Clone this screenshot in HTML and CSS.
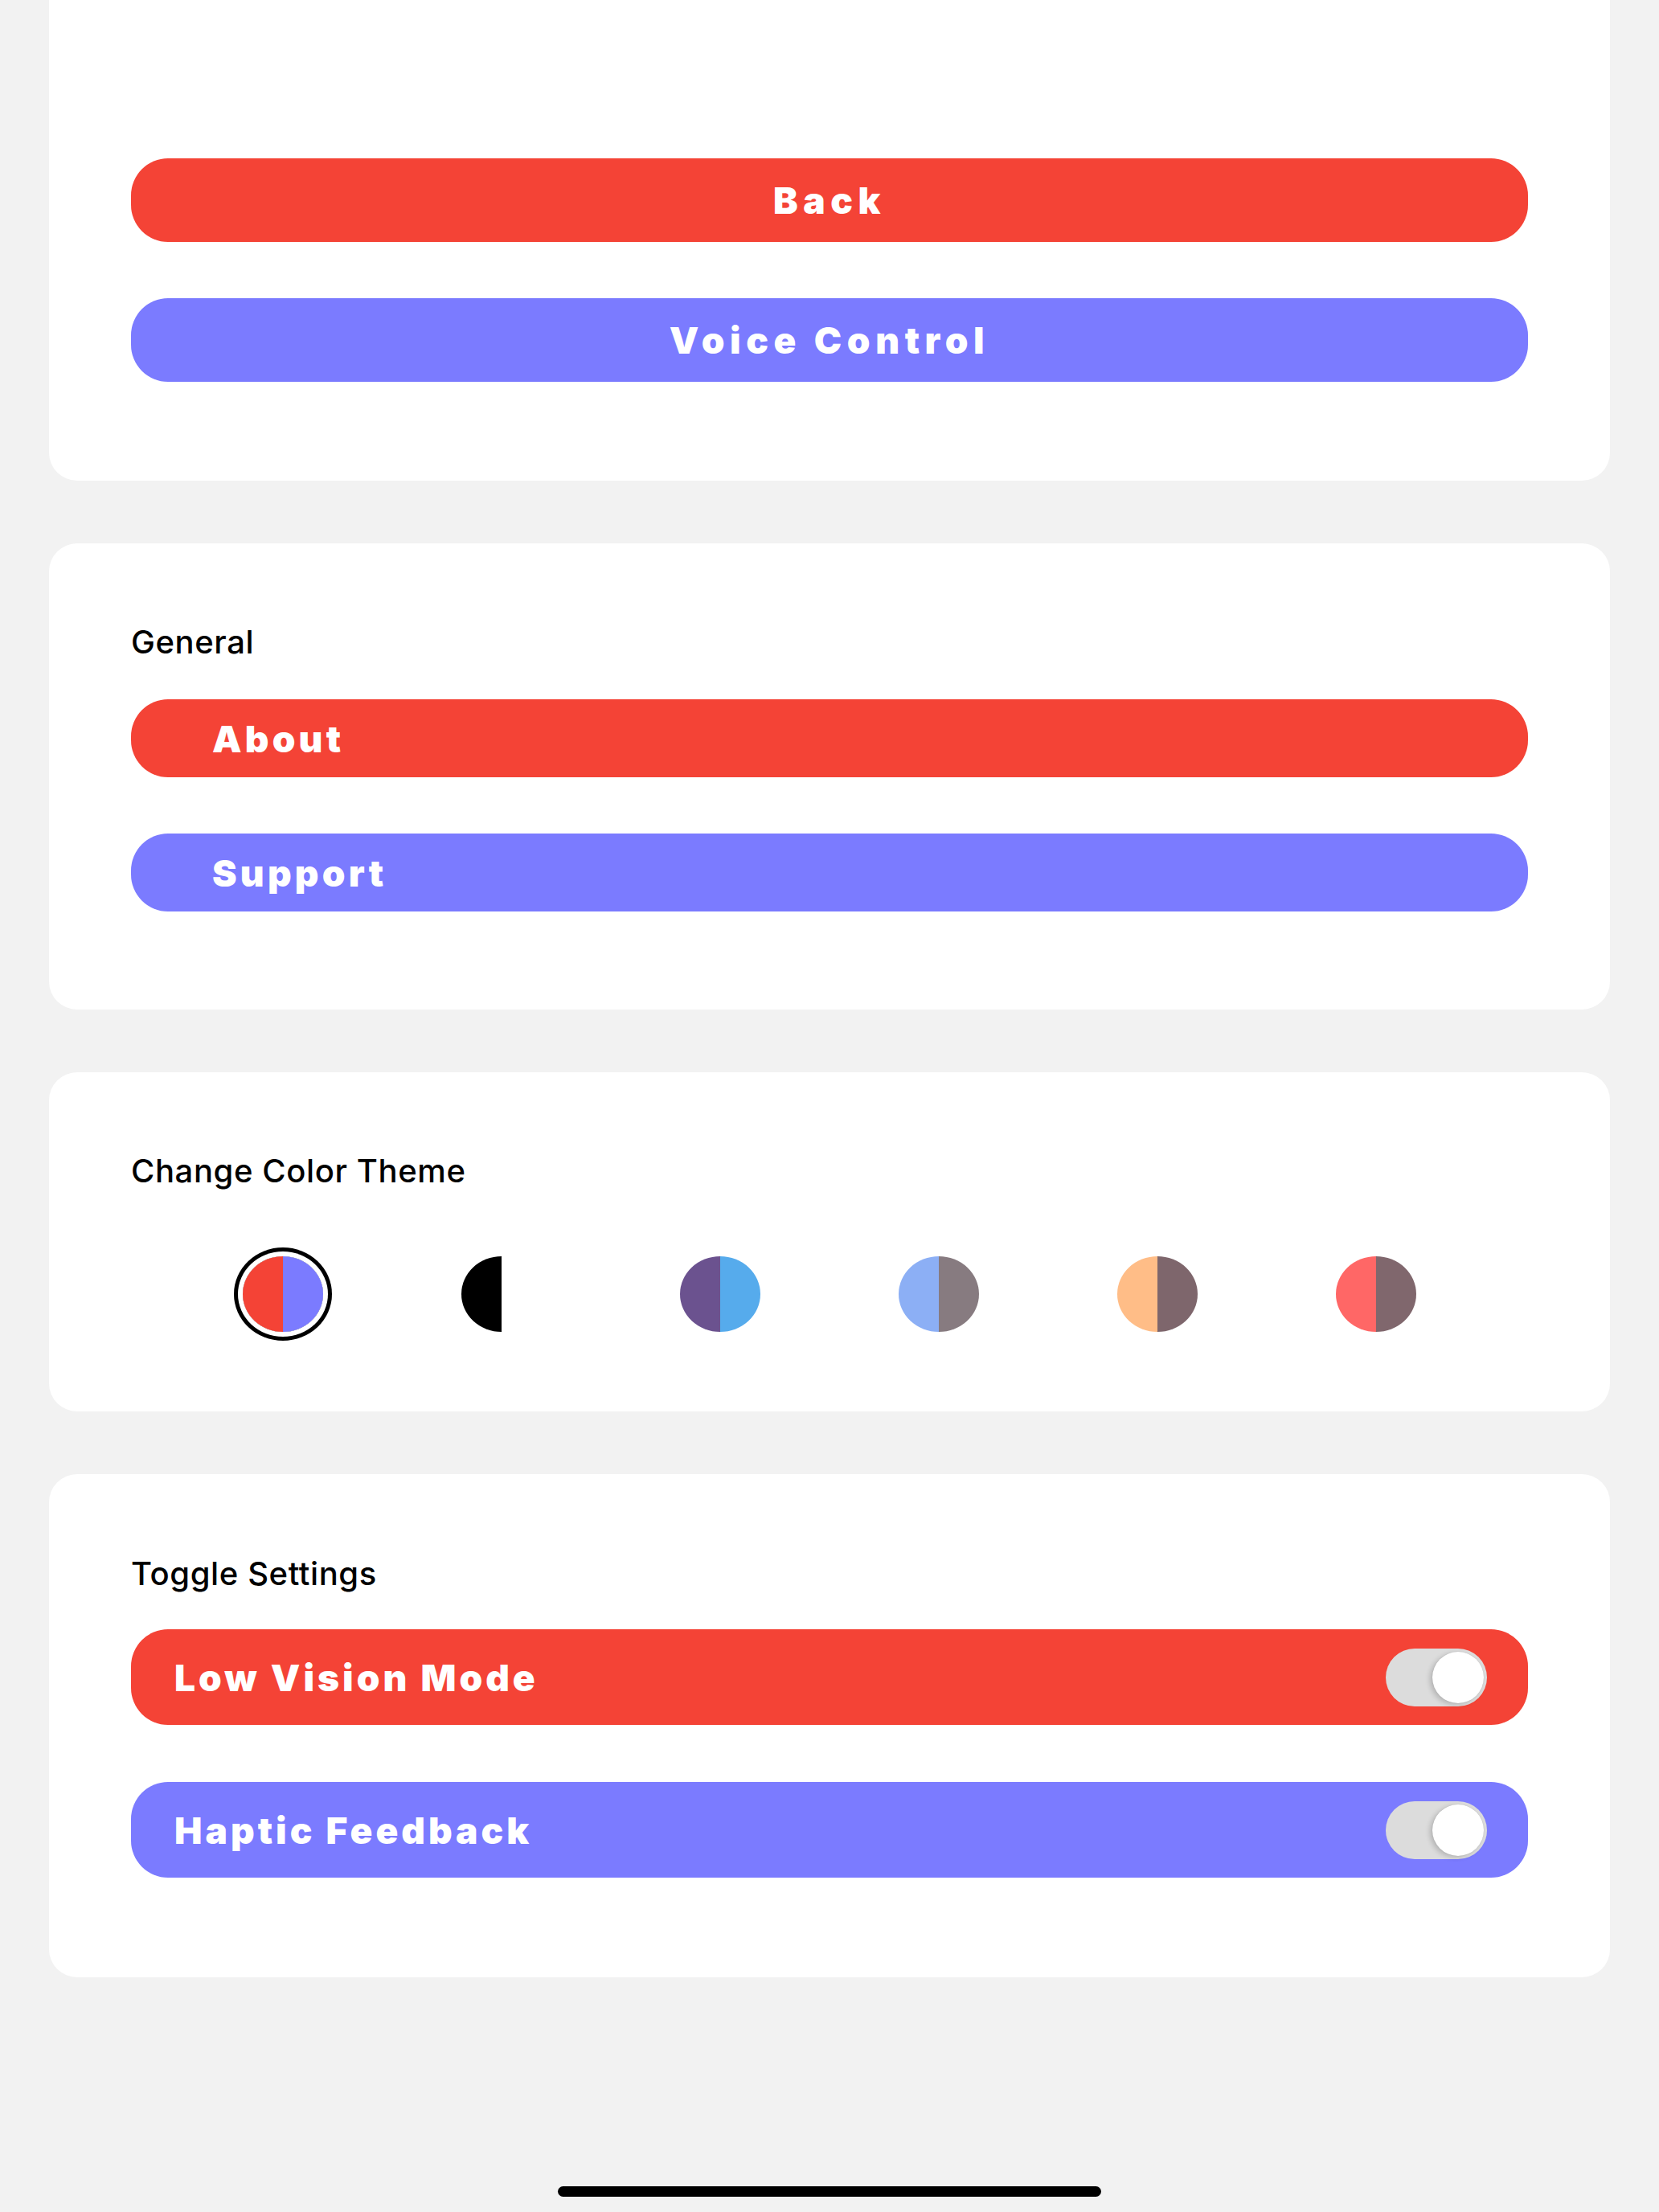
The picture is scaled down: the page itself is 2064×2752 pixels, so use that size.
FILE: index.html
```html
<!DOCTYPE html>
<html lang="en">
<head>
<meta charset="utf-8">
<title>Settings</title>
<link rel="stylesheet" href="styles.css">
</head>
<body>
<main class="screen">
  <section class="card card-top">
    <div class="stack">
      <button class="btn btn-red btn-center">Back</button>
      <button class="btn btn-blue btn-center">Voice Control</button>
    </div>
  </section>

  <section class="card">
    <h2 class="card-title">General</h2>
    <div class="stack">
      <button class="btn btn-red btn-left btn-small">About</button>
      <button class="btn btn-blue btn-left btn-small">Support</button>
    </div>
  </section>

  <section class="card card-themes">
    <h2 class="card-title">Change Color Theme</h2>
    <div class="swatches">
      <div class="swatch-slot"><span class="swatch selected sw-1"></span></div>
      <div class="swatch-slot"><span class="swatch sw-2"></span></div>
      <div class="swatch-slot"><span class="swatch sw-3"></span></div>
      <div class="swatch-slot"><span class="swatch sw-4"></span></div>
      <div class="swatch-slot"><span class="swatch sw-5"></span></div>
      <div class="swatch-slot"><span class="swatch sw-6"></span></div>
    </div>
  </section>

  <section class="card card-toggles">
    <h2 class="card-title">Toggle Settings</h2>
    <div class="stack">
      <div class="btn btn-red toggle-row">
        <span class="toggle-label">Low Vision Mode</span>
        <span class="switch"><span class="knob"></span></span>
      </div>
      <div class="btn btn-blue toggle-row">
        <span class="toggle-label">Haptic Feedback</span>
        <span class="switch"><span class="knob"></span></span>
      </div>
    </div>
  </section>

  <div class="home-indicator"></div>
</main>
</body>
</html>
```

FILE: styles.css
```css
* {
  box-sizing: border-box;
}

html, body {
  margin: 0;
  padding: 0;
}

body {
  background: #f2f2f2;
  font-family: Inter, "Liberation Sans", sans-serif;
  width: 2064px;
  height: 2752px;
  overflow: hidden;
}

.screen {
  display: flex;
  flex-direction: column;
  gap: 78px;
  padding: 0 61px;
}

.card {
  background: #ffffff;
  border-radius: 35px;
  padding: 99px 102px 122px;
  display: flex;
  flex-direction: column;
}

.card-top {
  border-radius: 0 0 35px 35px;
  padding-top: 197px;
  padding-bottom: 123px;
}

.card-title {
  margin: 0 0 47px;
  font-size: 40px;
  line-height: 48px;
  font-weight: 500;
  letter-spacing: 0.6px;
  color: #000;
}

.stack {
  display: flex;
  flex-direction: column;
  gap: 70px;
}

.btn {
  border: none;
  margin: 0;
  width: 100%;
  height: 104px;
  border-radius: 46px;
  color: #fff;
  font-family: Inter, "Liberation Sans", sans-serif;
  font-size: 46px;
  font-weight: 900;
  letter-spacing: 6.6px;
  display: flex;
  align-items: center;
}

.btn-red {
  background: #f44336;
}

.btn-blue {
  background: #7b7bff;
}

.btn-center {
  justify-content: center;
  padding: 0;
}

.btn-left {
  justify-content: flex-start;
  padding: 0 0 0 101px;
  letter-spacing: 4.2px;
}

.btn-small {
  height: 97px;
}

.card-themes {
  padding-bottom: 85px;
}

.card-themes .card-title {
  margin-bottom: 68px;
}

.swatches {
  display: flex;
  justify-content: center;
  gap: 150px;
}

.swatch-slot {
  width: 122px;
  height: 122px;
  display: flex;
  align-items: center;
  justify-content: center;
}

.swatch {
  width: 100px;
  height: 94px;
  border-radius: 50%;
  display: block;
}

.swatch.selected {
  box-shadow: 0 0 0 6px #ffffff, 0 0 0 11px #000000;
}

.sw-1 { background: linear-gradient(to right, #f44336 50%, #7b7bff 50%); }
.sw-2 { background: linear-gradient(to right, #000000 50%, #ffffff 50%); }
.sw-3 { background: linear-gradient(to right, #6b528f 50%, #56abec 50%); }
.sw-4 { background: linear-gradient(to right, #8caff5 50%, #877b80 50%); }
.sw-5 { background: linear-gradient(to right, #ffbd87 50%, #7e666c 50%); }
.sw-6 { background: linear-gradient(to right, #ff6766 50%, #80676d 50%); }

.card-toggles {
  padding-top: 100px;
  padding-bottom: 124px;
}

.card-toggles .card-title {
  margin-bottom: 45px;
}

.card-toggles .stack {
  gap: 71px;
}

.toggle-row {
  height: 119px;
  padding: 0 51px 0 54px;
  justify-content: space-between;
}

.toggle-label {
  letter-spacing: 4px;
}

.switch {
  width: 126px;
  height: 72px;
  border-radius: 36px;
  background: #dcdcdc;
  display: flex;
  align-items: center;
  justify-content: flex-end;
  padding-right: 4px;
}

.knob {
  width: 64px;
  height: 64px;
  border-radius: 50%;
  background: #ffffff;
  box-shadow: -3px 2px 6px rgba(0, 0, 0, 0.18), 0 0 1px rgba(0, 0, 0, 0.2);
}

.home-indicator {
  align-self: center;
  width: 676px;
  height: 13px;
  border-radius: 7px;
  background: #000;
  margin-top: 182px;
}
```
